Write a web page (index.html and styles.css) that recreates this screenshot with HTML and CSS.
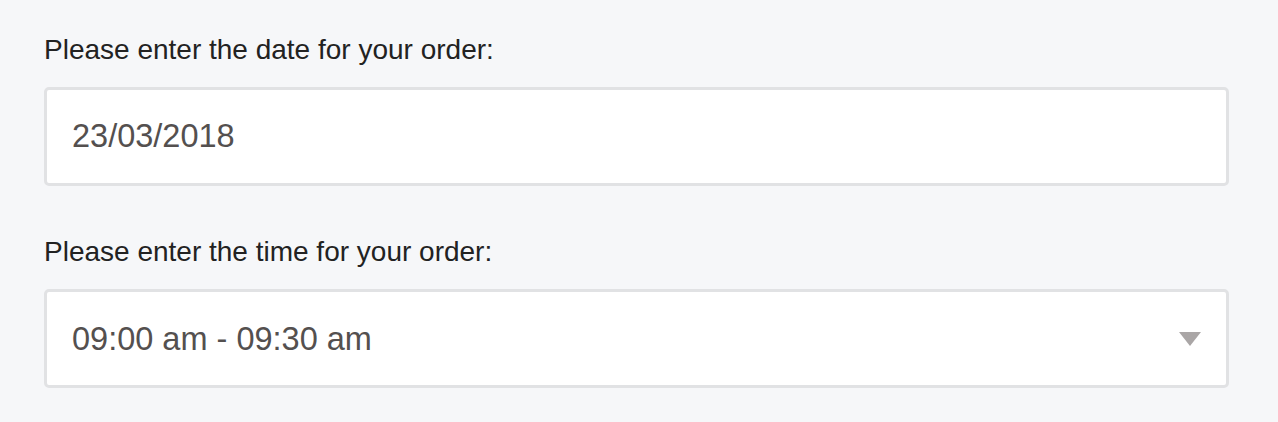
FILE: index.html
```html
<!DOCTYPE html>
<html lang="en">
<head>
    <meta charset="UTF-8">
    <meta name="viewport" content="width=device-width, initial-scale=1.0">
    <title>Order date and time</title>
    <link rel="stylesheet" href="styles.css">
</head>
<body>

<form class="order-form">
    <div class="field">
        <label for="order-date">Please enter the date for your order:</label>
        <input type="text" id="order-date" class="control" value="23/03/2018">
    </div>

    <div class="field">
        <label for="order-time">Please enter the time for your order:</label>
        <div class="select-wrap">
            <select id="order-time" class="control">
                <option>09:00 am - 09:30 am</option>
                <option>09:30 am - 10:00 am</option>
                <option>10:00 am - 10:30 am</option>
            </select>
            <svg class="caret" width="22" height="14" viewBox="0 0 22 14">
                <path d="M0 0 H22 L11 14 Z" fill="#aaa6a6"/>
            </svg>
        </div>
    </div>
</form>

</body>
</html>
```

FILE: styles.css
```css
body {
    margin: 0;
    padding: 29px 49px 0 44px;
    background-color: #f6f7f9;
    font-family: "Liberation Sans", Arial, sans-serif;
    color: #222;
}
.field {
    margin-bottom: 45px;
}
.field label {
    display: block;
    font-size: 28px;
    line-height: 42px;
    margin-bottom: 16px;
}
.control {
    display: block;
    box-sizing: border-box;
    width: 100%;
    height: 99px;
    margin: 0;
    padding: 0 25px;
    border: 3px solid #e1e2e4;
    border-radius: 5px;
    background-color: #fff;
    font-family: "Liberation Sans", Arial, sans-serif;
    font-size: 32.5px;
    color: #54504f;
    outline: none;
}
select.control {
    -webkit-appearance: none;
    appearance: none;
    padding-right: 70px;
}
.select-wrap {
    position: relative;
}
.caret {
    position: absolute;
    right: 28px;
    top: 43px;
    pointer-events: none;
}
```
